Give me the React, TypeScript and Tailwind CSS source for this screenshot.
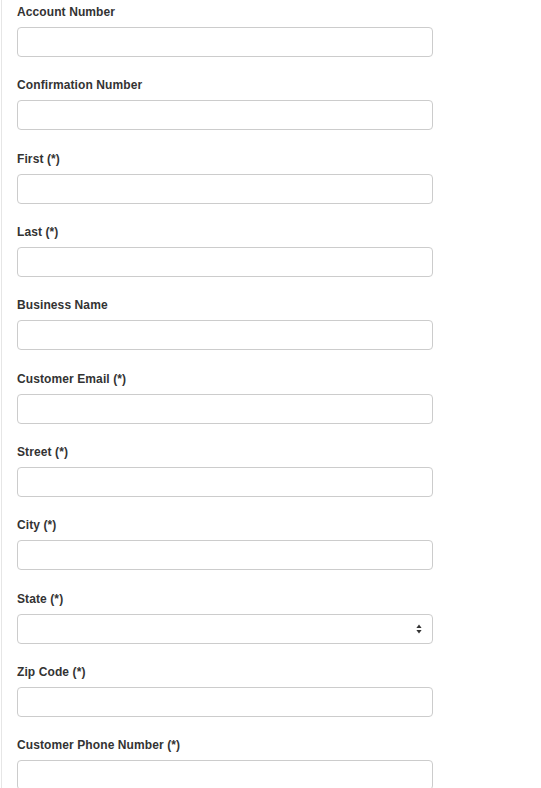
import React from "react";

const fields: { label: string; select?: boolean }[] = [
  { label: "Account Number" },
  { label: "Confirmation Number" },
  { label: "First (*)" },
  { label: "Last (*)" },
  { label: "Business Name" },
  { label: "Customer Email (*)" },
  { label: "Street (*)" },
  { label: "City (*)" },
  { label: "State (*)", select: true },
  { label: "Zip Code (*)" },
  { label: "Customer Phone Number (*)" },
];

export default function App() {
  return (
    <div
      className="h-[788px] w-[541px] overflow-hidden bg-white"
      style={{ fontFamily: '"Liberation Sans", Arial, Helvetica, sans-serif' }}
    >
      <div className="ml-px h-full border-l border-[#e6e6e6] pl-[15px] pt-[4px]">
        {fields.map((f) => (
          <div key={f.label} className="mb-[20.33px] w-[416px]">
            <label className="mb-[6px] block text-[12px] font-bold leading-[17px] tracking-[0.1px] text-[#333]">
              {f.label}
            </label>
            {f.select ? (
              <div className="relative h-[30px] w-full rounded-[4px] border border-[#cccccc] bg-white">
                <svg
                  className="absolute right-[10px] top-1/2 -translate-y-1/2"
                  width="6"
                  height="10"
                  viewBox="0 0 6 10"
                >
                  <path d="M3 0.5 L5.6 4 L0.4 4 Z" fill="#333" />
                  <path d="M3 9.5 L5.6 6 L0.4 6 Z" fill="#333" />
                </svg>
              </div>
            ) : (
              <input
                type="text"
                className="block h-[30px] w-full rounded-[4px] border border-[#cccccc] bg-white px-3 text-[12px] outline-none"
              />
            )}
          </div>
        ))}
      </div>
    </div>
  );
}
